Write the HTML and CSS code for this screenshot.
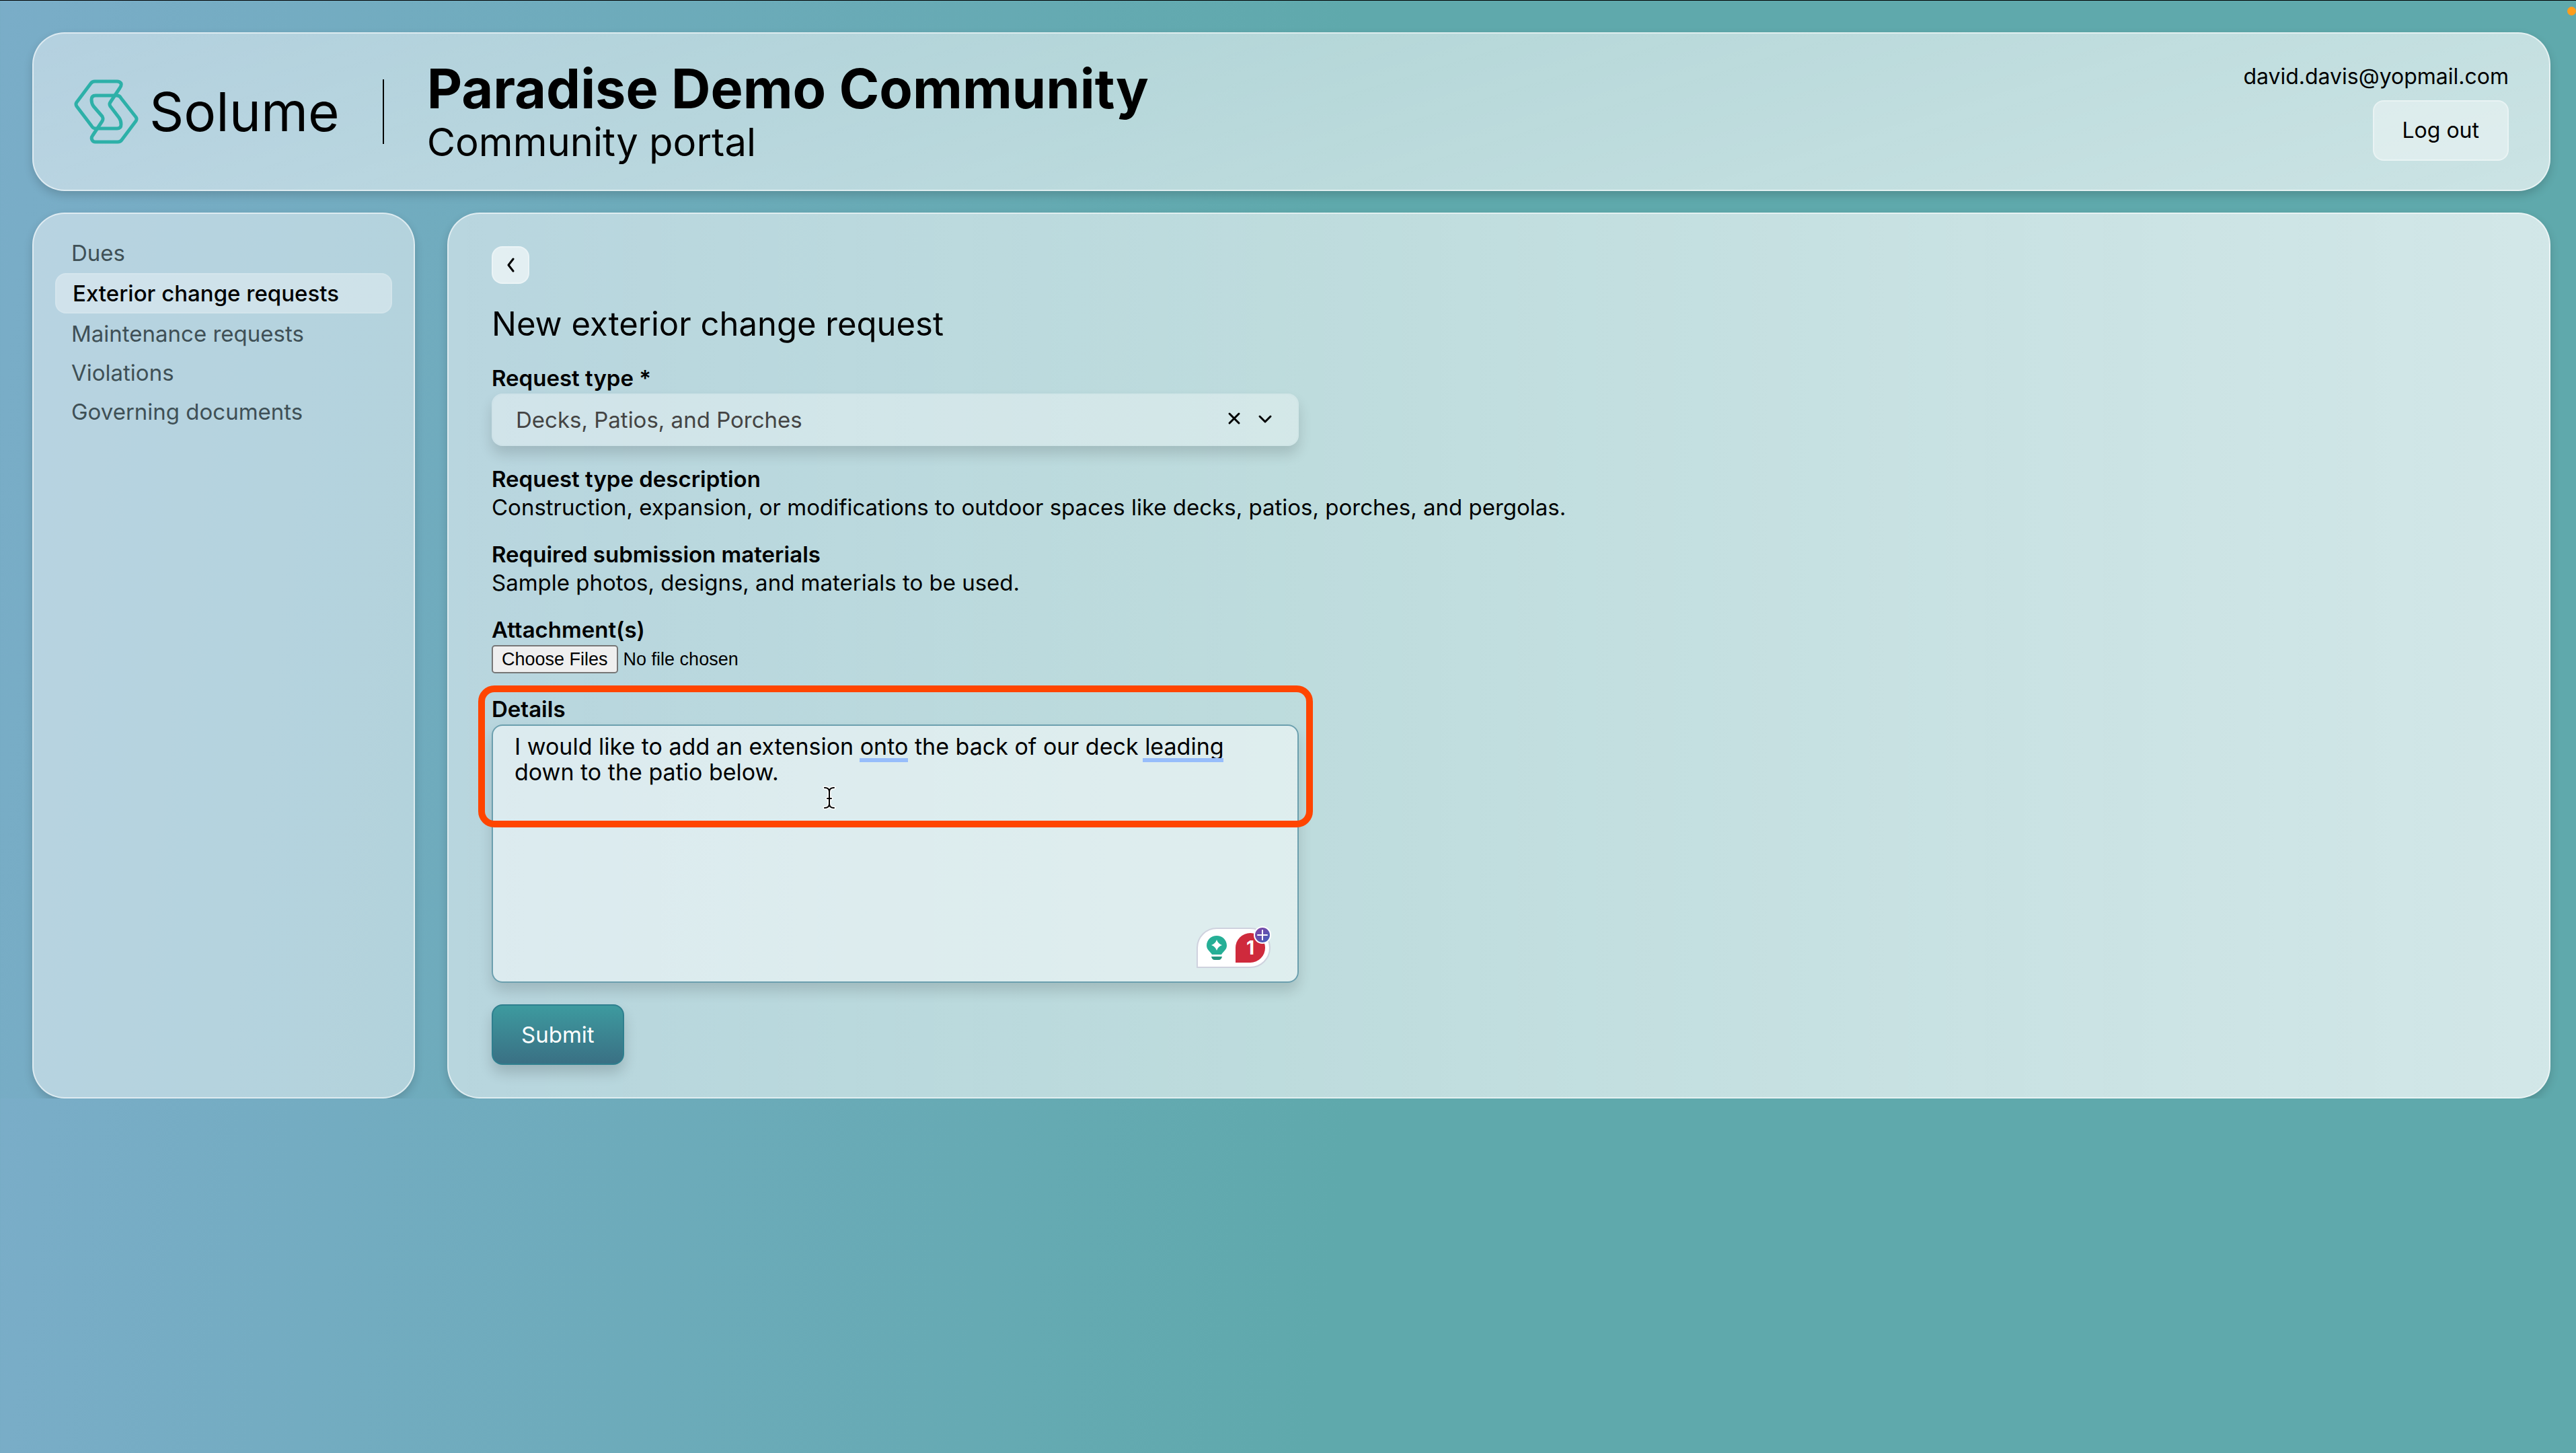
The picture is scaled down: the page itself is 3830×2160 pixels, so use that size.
FILE: index.html
```html
<!DOCTYPE html>
<html lang="en">
<head>
    <meta charset="UTF-8">
    <meta name="viewport" content="width=device-width, initial-scale=1.0">
    <title>Community portal</title>
    <link rel="stylesheet" href="styles.css">
</head>
<body>
    <span class="recording-dot"></span>

    <header class="panel header">
        <a class="brand" href="#">
            <svg class="brand-mark" viewBox="0 0 96 96" aria-hidden="true">
                <path d="M32 73 H64 Q70 73 70 67 Q70 61 67 57 L54 40 Q52 37 54 34 L68 13 Q71 9 70 6 Q68 3 64 3 H31 Q27 3 25 6 L4 34 Q2 37 4 40 L26 69 Q28 73 32 73 Z"/>
                <path d="M64 24 H32 Q26 24 26 30 Q26 36 29 40 L42 55 Q44 59 42 62 L28 83 Q25 87 27 90 Q28 93 32 93 H65 Q69 93 71 90 L92 62 Q94 59 92 56 L70 28 Q68 24 64 24 Z"/>
            </svg>
            <span>Solume</span>
        </a>
        <span class="divider"></span>
        <div class="titles">
            <h1>Paradise Demo Community</h1>
            <p>Community portal</p>
        </div>
        <div class="account">
            <span>david.davis@yopmail.com</span>
            <button type="button" class="btn">Log out</button>
        </div>
    </header>

    <div class="layout">
        <nav class="panel sidebar">
            <a href="#">Dues</a>
            <a href="#" class="active" aria-current="page">Exterior change requests</a>
            <a href="#">Maintenance requests</a>
            <a href="#">Violations</a>
            <a href="#">Governing documents</a>
        </nav>

        <main class="panel content">
            <button type="button" class="back" aria-label="Back">
                <svg viewBox="0 0 24 24"><path d="M16 3 L9 12 L16 21"/></svg>
            </button>
            <h2>New exterior change request</h2>

            <form>
                <div class="field">
                    <label for="request-type">Request type *</label>
                    <div class="select-wrap">
                        <select id="request-type">
                            <option>Decks, Patios, and Porches</option>
                        </select>
                        <button type="button" class="clear" aria-label="Clear">
                            <svg viewBox="0 0 24 24"><path d="M5 5 L19 19 M19 5 L5 19"/></svg>
                        </button>
                        <svg class="arrow" viewBox="0 0 24 24"><path d="M4 8 L12 16 L20 8"/></svg>
                    </div>
                </div>

                <div class="info">
                    <h3>Request type description</h3>
                    <p>Construction, expansion, or modifications to outdoor spaces like decks, patios, porches, and pergolas.</p>
                </div>

                <div class="info">
                    <h3>Required submission materials</h3>
                    <p>Sample photos, designs, and materials to be used.</p>
                </div>

                <div class="field attachments">
                    <label for="files">Attachment(s)</label>
                    <input type="file" id="files" multiple>
                </div>

                <div class="field details">
                    <label for="details">Details</label>
                    <textarea id="details" spellcheck="false">I would like to add an extension onto the back of our deck leading down to the patio below.</textarea>
                    <span class="mark mark-onto"></span>
                    <span class="mark mark-leading"></span>
                    <span class="highlight"></span>
                    <svg class="cursor" viewBox="0 0 20 36" aria-hidden="true">
                        <path class="halo" d="M3 3 Q10 3 10 9 V27 Q10 33 3 33 M17 3 Q10 3 10 9 V27 Q10 33 17 33 M7 19 H13"/>
                        <path d="M3 3 Q10 3 10 9 V27 Q10 33 3 33 M17 3 Q10 3 10 9 V27 Q10 33 17 33 M7 19 H13"/>
                    </svg>
                    <!-- writing assistant widget -->
                    <div class="assistant">
                        <svg class="bulb" viewBox="0 0 30 36" aria-hidden="true">
                            <path fill="#26af96" d="M15 0 C23 0 30 6 30 14.500 C30 21 25 23 22 28 H8 C5 23 0 21 0 14.500 C0 6 7 0 15 0 Z"/>
                            <path fill="#25957f" d="M7 31 H23 Q22 36 18 36 H12 Q8 36 7 31 Z"/>
                            <path fill="#fff" d="M15 6 Q17 12 23 14 Q17 16 15 22 Q13 16 7 14 Q13 12 15 6 Z"/>
                        </svg>
                        <span class="count">1</span>
                        <svg class="plus" viewBox="0 0 26 26" aria-hidden="true">
                            <defs>
                                <linearGradient id="plus-fill" x1="0" y1="0" x2="1" y2="1">
                                    <stop offset="0" stop-color="#8a3fa0"/>
                                    <stop offset="1" stop-color="#3b62bd"/>
                                </linearGradient>
                            </defs>
                            <circle cx="13" cy="13" r="12" fill="url(#plus-fill)" stroke="#fff" stroke-width="2"/>
                            <path d="M13 6 V20 M6 13 H20" stroke="#fff" stroke-width="2"/>
                        </svg>
                    </div>
                </div>

                <button type="submit" class="btn btn-submit">Submit</button>
            </form>
        </main>
    </div>
</body>
</html>
```
FILE: styles.css
```css
* {
    box-sizing: border-box;
}

html {
    background: linear-gradient(97deg, #7aadc8, #5fa9ac 50%);
}

body {
    display: flex;
    flex-direction: column;
    gap: 32px;
    margin: 0;
    padding: 47px 38px 0 48px;
    border-top: 1px solid #000;
    font-family: Inter, "Open Sans", sans-serif;
    font-size: 33px;
    line-height: 42px;
    color: #000;
}

h1, h2, h3, p {
    margin: 0;
}

button, select, textarea {
    font: inherit;
    color: inherit;
}

svg {
    fill: none;
    stroke-linecap: round;
    stroke-linejoin: round;
}

.recording-dot {
    position: absolute;
    top: 10px;
    right: 0;
    width: 13px;
    height: 13px;
    border-radius: 50%;
    background-color: #ff9d1c;
}

.panel {
    border: 2px solid rgba(255, 255, 255, .55);
    border-radius: 48px;
    background-origin: border-box;
    box-shadow: 0 6px 14px rgba(0, 0, 0, .16);
}

/* header */
.header {
    display: flex;
    align-items: center;
    padding: 36px 60px;
    background-image: linear-gradient(163deg, rgba(255, 255, 255, .44), rgba(255, 255, 255, .68));
}

.brand {
    display: flex;
    align-items: center;
    gap: 16px;
    font-size: 80px;
    line-height: 96px;
    color: #000;
    text-decoration: none;
}

.brand-mark {
    width: 96px;
    height: 96px;
    stroke: #2db0a8;
    stroke-width: 5;
}

.divider {
    width: 2px;
    height: 96px;
    margin: 0 64px;
    background-color: #000;
}

.titles h1 {
    padding-top: 2px;
    font-size: 81px;
    line-height: 88px;
    font-weight: 700;
}

.titles p {
    font-size: 58px;
    line-height: 70px;
}

.account {
    display: flex;
    flex-direction: column;
    align-items: flex-end;
    gap: 14px;
    margin-left: auto;
    font-size: 32px;
}

.btn {
    height: 90px;
    padding: 0 42px;
    border: 2px solid rgba(255, 255, 255, .35);
    border-radius: 16px;
    background-color: rgba(255, 255, 255, .4);
}

/* sidebar + content */
.layout {
    display: grid;
    grid-template-columns: 569px 1fr;
    gap: 48px;
}

.sidebar {
    display: flex;
    flex-direction: column;
    gap: 2px;
    padding: 30px 32px;
    background-color: rgba(255, 255, 255, .47);
}

.sidebar a {
    padding: 7px 24px;
    color: #3f5056;
    text-decoration: none;
}

.sidebar .active {
    border: 2px solid rgba(255, 255, 255, .1);
    border-radius: 16px;
    background-color: rgba(255, 255, 255, .35);
    color: #000;
    font-weight: 500;
}

.content {
    padding: 48px 64px;
    background-image: linear-gradient(to right, rgba(255, 255, 255, .51), rgba(255, 255, 255, .72));
}

.back {
    display: flex;
    align-items: center;
    justify-content: center;
    width: 56px;
    height: 56px;
    padding: 0;
    border: 2px solid rgba(255, 255, 255, .3);
    border-radius: 16px;
    background-color: rgba(255, 255, 255, .6);
}

.back svg,
.clear svg,
.arrow {
    display: block;
    width: 24px;
    height: 24px;
    stroke: #000;
    stroke-width: 3;
}

.content h2 {
    margin-top: 28px;
    font-size: 49px;
    line-height: 64px;
    font-weight: 400;
}

form {
    margin-top: 27px;
}

.field label,
.info h3 {
    display: block;
    font-size: 33px;
    line-height: 42px;
    font-weight: 600;
}

.select-wrap {
    position: relative;
    max-width: 1200px;
    margin-top: 2px;
}

.select-wrap select {
    display: block;
    width: 100%;
    height: 78px;
    padding: 0 120px 0 34px;
    appearance: none;
    border: 2px solid rgba(255, 255, 255, .3);
    border-radius: 16px;
    background: rgba(255, 255, 255, .34) padding-box;
    box-shadow: 0 12px 20px rgba(0, 0, 0, .14);
    color: #444;
}

.clear {
    position: absolute;
    top: 25px;
    right: 84px;
    padding: 0;
    border: 0;
    background: none;
}

.arrow {
    position: absolute;
    top: 26px;
    right: 38px;
}

.info {
    margin-top: 28px;
}

.attachments {
    margin-top: 28px;
}

.attachments input {
    display: block;
    margin-top: 2px;
    font-family: "Liberation Sans", Arial, sans-serif;
    font-size: 27px;
    line-height: 30px;
}

.attachments input::file-selector-button {
    height: 42px;
    margin-right: 8px;
    padding: 0 13px;
    border: 2px solid #767676;
    border-radius: 5px;
    background-color: #efefef;
    font: inherit;
}

.details {
    position: relative;
    max-width: 1200px;
    margin-top: 32px;
}

.details textarea {
    display: block;
    width: 100%;
    height: 384px;
    margin-top: 2px;
    padding: 12px 32px;
    border: 2px solid #6b9fae;
    border-radius: 16px;
    background-color: rgba(255, 255, 255, .5);
    box-shadow: 0 12px 20px rgba(0, 0, 0, .14);
    font-size: 34px;
    line-height: 38px;
    outline: none;
    resize: none;
}

/* grammar underlines in the text box */
.mark {
    position: absolute;
    top: 94px;
    height: 6px;
    background-color: #97bdfb;
}

.mark-onto {
    left: 547px;
    width: 72px;
}

.mark-leading {
    left: 968px;
    width: 120px;
}

.highlight {
    position: absolute;
    top: -14px;
    left: -20px;
    right: -21px;
    height: 211px;
    border: 10px solid #ff4500;
    border-radius: 24px;
    pointer-events: none;
}

.cursor {
    position: absolute;
    top: 135px;
    left: 492px;
    width: 20px;
    height: 36px;
    stroke: #000;
    stroke-width: 2;
}

.cursor .halo {
    stroke: #fff;
    stroke-width: 5;
}

.assistant {
    position: absolute;
    right: 42px;
    bottom: 22px;
    display: flex;
    align-items: center;
    gap: 13px;
    width: 110px;
    height: 60px;
    padding-left: 13px;
    border: 2px solid #cfd2de;
    border-radius: 30px 30px 30px 0;
    background-color: #fff;
}

.bulb {
    width: 30px;
    height: 36px;
}

.count {
    width: 44px;
    height: 44px;
    border-radius: 22px 22px 22px 0;
    background-color: #cf2a3c;
    color: #fff;
    font-size: 28px;
    line-height: 44px;
    font-weight: 700;
    text-align: center;
}

.plus {
    position: absolute;
    top: -4px;
    right: -3px;
    width: 26px;
    height: 26px;
}

.btn-submit {
    margin-top: 32px;
    border-color: #2f7f8e;
    background: linear-gradient(#3d9a9f, #3a7084);
    box-shadow: 0 12px 20px rgba(0, 0, 0, .16);
    color: #fff;
}
```
